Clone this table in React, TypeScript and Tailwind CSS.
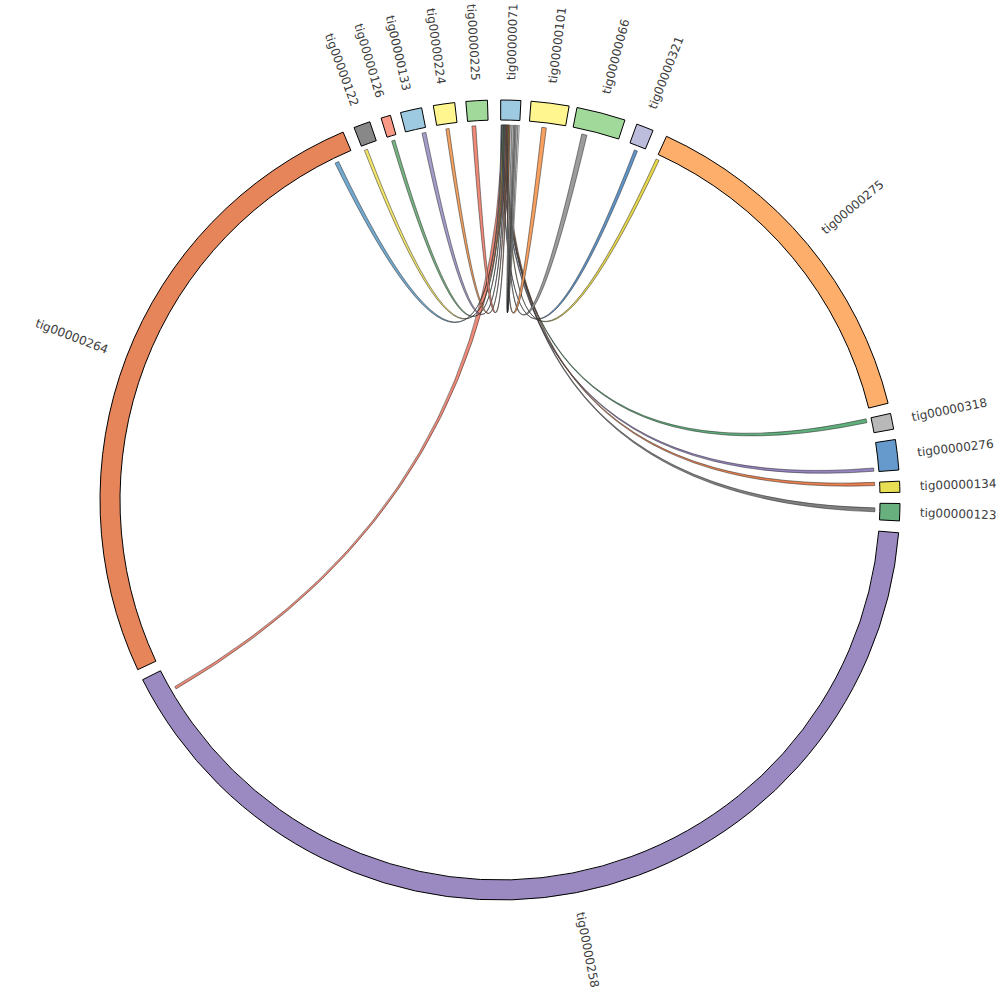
import React from "react";

const CX = 500;
const CY = 500;
const R_IN = 380;
const R_OUT = 400;
const R_LINK = 375;
const R_LABEL = 420;

const rad = (d: number) => (d * Math.PI) / 180;
const pt = (r: number, d: number): [number, number] => [
  CX + r * Math.sin(rad(d)),
  CY - r * Math.cos(rad(d)),
];
const f = (n: number) => n.toFixed(2);

type Block = { name: string; a1: number; a2: number; color: string };

const blocks: Block[] = [
  { name: "tig00000071", a1: 0.1, a2: 3.0, color: "#9ecae1" },
  { name: "tig00000101", a1: 4.45, a2: 9.95, color: "#fff68f" },
  { name: "tig00000066", a1: 11.1, a2: 18.2, color: "#a1d99b" },
  { name: "tig00000321", a1: 20.0, a2: 22.5, color: "#bcbddc" },
  { name: "tig00000275", a1: 24.6, a2: 76.0, color: "#fdae6b" },
  { name: "tig00000318", a1: 77.5, a2: 79.8, color: "#b8b8b8" },
  { name: "tig00000276", a1: 81.3, a2: 85.7, color: "#6699cc" },
  { name: "tig00000134", a1: 87.3, a2: 88.9, color: "#e8df55" },
  { name: "tig00000123", a1: 90.5, a2: 93.0, color: "#68b07e" },
  { name: "tig00000258", a1: 94.7, a2: 243.3, color: "#9b8ac1" },
  { name: "tig00000264", a1: 244.9, a2: 336.9, color: "#e6845a" },
  { name: "tig00000122", a1: 338.6, a2: 341.0, color: "#888888" },
  { name: "tig00000126", a1: 342.7, a2: 344.1, color: "#f89a85" },
  { name: "tig00000133", a1: 345.6, a2: 348.7, color: "#9ecae1" },
  { name: "tig00000224", a1: 350.4, a2: 353.5, color: "#fff68f" },
  { name: "tig00000225", a1: 355.1, a2: 358.2, color: "#a1d99b" },
];

type Link = { h1: number; h2: number; b1: number; b2: number; color: string };

// hub-end order (left to right inside tig00000071)
const hubOrder: { b1: number; b2: number; color: string }[] = [
  { b1: 333.9, b2: 334.5, color: "#74a9cf" },
  { b1: 85.1, b2: 85.6, color: "#9583c0" },
  { b1: 338.8, b2: 339.3, color: "#f2e66a" },
  { b1: 21.0, b2: 21.5, color: "#5f94c8" },
  { b1: 343.2, b2: 343.7, color: "#78b382" },
  { b1: 77.5, b2: 78.1, color: "#5fae7c" },
  { b1: 348.0, b2: 348.6, color: "#a59cc9" },
  { b1: 91.2, b2: 91.8, color: "#808080" },
  { b1: 351.7, b2: 352.2, color: "#f4a261" },
  { b1: 87.3, b2: 87.8, color: "#e9804f" },
  { b1: 355.7, b2: 356.3, color: "#ef8a78" },
  { b1: 12.6, b2: 13.4, color: "#9c9c9c" },
  { b1: 24.6, b2: 25.1, color: "#e8d94c" },
  { b1: 6.4, b2: 7.1, color: "#f8a060" },
];

const links: Link[] = [
  { h1: 0.25, h2: 1.3, b1: 239.75, b2: 240.15, color: "#f08a78" },
  ...hubOrder.map((l, i) => ({
    h1: 0.15 + i * 0.095,
    h2: 0.15 + i * 0.095 + 0.14,
    b1: l.b1,
    b2: l.b2,
    color: l.color,
  })),
  { h1: 1.6, h2: 1.8, b1: 2.75, b2: 2.95, color: "#ffffff" },
  { h1: 1.9, h2: 2.08, b1: 2.5, b2: 2.68, color: "#ffffff" },
  { h1: 2.14, h2: 2.26, b1: 2.32, b2: 2.44, color: "#ffffff" },
];

function blockPath(b: Block) {
  const large = b.a2 - b.a1 > 180 ? 1 : 0;
  const o1 = pt(R_OUT, b.a1);
  const o2 = pt(R_OUT, b.a2);
  const i2 = pt(R_IN, b.a2);
  const i1 = pt(R_IN, b.a1);
  return `M${f(o1[0])},${f(o1[1])} A${R_OUT},${R_OUT} 0 ${large} 1 ${f(o2[0])},${f(o2[1])} L${f(i2[0])},${f(i2[1])} A${R_IN},${R_IN} 0 ${large} 0 ${f(i1[0])},${f(i1[1])} Z`;
}

function linkPath(l: Link) {
  const A1 = pt(R_LINK, l.h1);
  const A2 = pt(R_LINK, l.h2);
  const B1 = pt(R_LINK, l.b1);
  const B2 = pt(R_LINK, l.b2);
  const norm = (d: number) => ((d % 360) + 360) % 360;
  const bAfterA = norm(l.b1 - l.h2) < 180;
  if (bAfterA) {
    return `M${f(A1[0])},${f(A1[1])} A${R_LINK},${R_LINK} 0 0 1 ${f(A2[0])},${f(A2[1])} Q${CX},${CY} ${f(B1[0])},${f(B1[1])} A${R_LINK},${R_LINK} 0 0 1 ${f(B2[0])},${f(B2[1])} Q${CX},${CY} ${f(A1[0])},${f(A1[1])} Z`;
  }
  return `M${f(B1[0])},${f(B1[1])} A${R_LINK},${R_LINK} 0 0 1 ${f(B2[0])},${f(B2[1])} Q${CX},${CY} ${f(A1[0])},${f(A1[1])} A${R_LINK},${R_LINK} 0 0 1 ${f(A2[0])},${f(A2[1])} Q${CX},${CY} ${f(B1[0])},${f(B1[1])} Z`;
}

function Label({ b }: { b: Block }) {
  const mid = (b.a1 + b.a2) / 2;
  const [x, y] = pt(R_LABEL, mid);
  const outward = mid > 0 && mid < 180;
  const rot = outward ? mid - 90 : mid + 90;
  return (
    <text
      x={f(x)}
      y={f(y)}
      transform={`rotate(${f(rot)} ${f(x)} ${f(y)})`}
      textAnchor={outward ? "start" : "end"}
      dominantBaseline="central"
      fontSize={12}
      fill="#3c3c3c"
      fontFamily="'DejaVu Sans', 'Liberation Sans', sans-serif"
    >
      {b.name}
    </text>
  );
}

export default function App() {
  return (
    <div className="w-[1000px] h-[1000px] bg-white overflow-hidden">
      <svg width={1000} height={1000} viewBox="0 0 1000 1000" className="block">
        <g>
          {links.map((l, i) => (
            <path
              key={`l${i}`}
              d={linkPath(l)}
              fill={l.color}
              stroke="#222222"
              strokeWidth={0.5}
              strokeLinejoin="round"
            />
          ))}
        </g>
        <g>
          {blocks.map((b) => (
            <path
              key={b.name}
              d={blockPath(b)}
              fill={b.color}
              stroke="#000000"
              strokeWidth={1}
            />
          ))}
        </g>
        <g>
          {blocks.map((b) => (
            <Label key={`t${b.name}`} b={b} />
          ))}
        </g>
      </svg>
    </div>
  );
}
